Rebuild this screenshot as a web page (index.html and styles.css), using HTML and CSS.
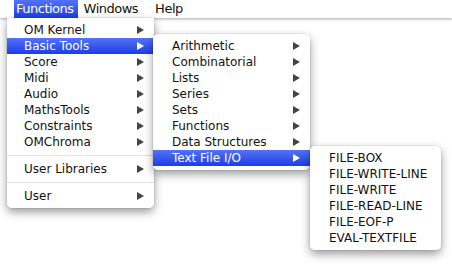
FILE: index.html
```html
<!DOCTYPE html>
<html lang="en">
  <head>
    <meta charset="UTF-8" />
    <meta name="viewport" content="width=device-width, initial-scale=1.0" />
    <title>Functions menu</title>
    <link rel="stylesheet" href="styles.css">
  </head>
  <body>
    <div class="menubar">
      <span class="bar-item active">Functions</span>
      <span class="bar-item">Windows</span>
      <span class="bar-item">Help</span>
    </div>

    <ul class="menu menu-main">
      <li class="item sub">OM Kernel</li>
      <li class="item sub selected">Basic Tools</li>
      <li class="item sub">Score</li>
      <li class="item sub">Midi</li>
      <li class="item sub">Audio</li>
      <li class="item sub">MathsTools</li>
      <li class="item sub">Constraints</li>
      <li class="item sub">OMChroma</li>
      <li class="sep"></li>
      <li class="item sub">User Libraries</li>
      <li class="sep"></li>
      <li class="item sub">User</li>
    </ul>

    <ul class="menu menu-tools">
      <li class="item sub">Arithmetic</li>
      <li class="item sub">Combinatorial</li>
      <li class="item sub">Lists</li>
      <li class="item sub">Series</li>
      <li class="item sub">Sets</li>
      <li class="item sub">Functions</li>
      <li class="item sub">Data Structures</li>
      <li class="item sub selected">Text File I/O</li>
    </ul>

    <ul class="menu menu-files">
      <li class="item">FILE-BOX</li>
      <li class="item">FILE-WRITE-LINE</li>
      <li class="item">FILE-WRITE</li>
      <li class="item">FILE-READ-LINE</li>
      <li class="item">FILE-EOF-P</li>
      <li class="item">EVAL-TEXTFILE</li>
    </ul>
  </body>
</html>
```

FILE: styles.css
```css
* {
  box-sizing: border-box;
}
body {
  margin: 0;
  width: 452px;
  height: 275px;
  background-color: #fff;
  font-family: "DejaVu Sans", Verdana, sans-serif;
  font-size: 12px;
  color: #111;
  position: relative;
  overflow: hidden;
}
.menubar {
  display: flex;
  height: 18px;
  padding-left: 14px;
  background-color: #fff;
  box-shadow: 0 1px 3px rgba(0, 0, 0, 0.35);
  position: relative;
  z-index: 1;
}
.bar-item {
  line-height: 18px;
  font-size: 13px;
  letter-spacing: -0.5px;
  margin-left: 17px;
}
.bar-item.active {
  background: linear-gradient(#5473f6, #1c3de6);
  color: #fff;
  padding: 0 4px 0 2px;
  margin-left: 0;
}
.bar-item.active + .bar-item {
  margin-left: 6px;
}
.menu {
  position: absolute;
  margin: 0;
  padding: 4px 0;
  list-style: none;
  background-color: rgba(255, 255, 255, 0.97);
  border-radius: 0 0 5px 5px;
  box-shadow: 0 4px 10px rgba(0, 0, 0, 0.4), 0 0 0 1px rgba(0, 0, 0, 0.06);
}
.menu-main {
  left: 7px;
  top: 18px;
  width: 147px;
  z-index: 2;
}
.menu-tools {
  left: 153px;
  top: 34px;
  width: 157px;
  border-radius: 5px;
  z-index: 3;
}
.menu-files {
  left: 310px;
  top: 146px;
  width: 131px;
  border-radius: 5px;
  z-index: 4;
}
.item {
  position: relative;
  height: 16px;
  line-height: 16px;
  padding-left: 17px;
  white-space: nowrap;
}
.menu-tools .item,
.menu-files .item {
  padding-left: 19px;
}
.item.sub::after {
  content: "";
  position: absolute;
  right: 10px;
  top: 4px;
  border-left: 7px solid #444;
  border-top: 4px solid transparent;
  border-bottom: 4px solid transparent;
}
.item.selected {
  background: linear-gradient(#5473f6, #1c3de6);
  color: #fff;
}
.item.selected::after {
  border-left-color: #fff;
}
.sep {
  height: 11px;
  position: relative;
}
.sep::before {
  content: "";
  position: absolute;
  left: 0;
  right: 0;
  top: 5px;
  border-top: 1px solid #e2e2e2;
}
```
